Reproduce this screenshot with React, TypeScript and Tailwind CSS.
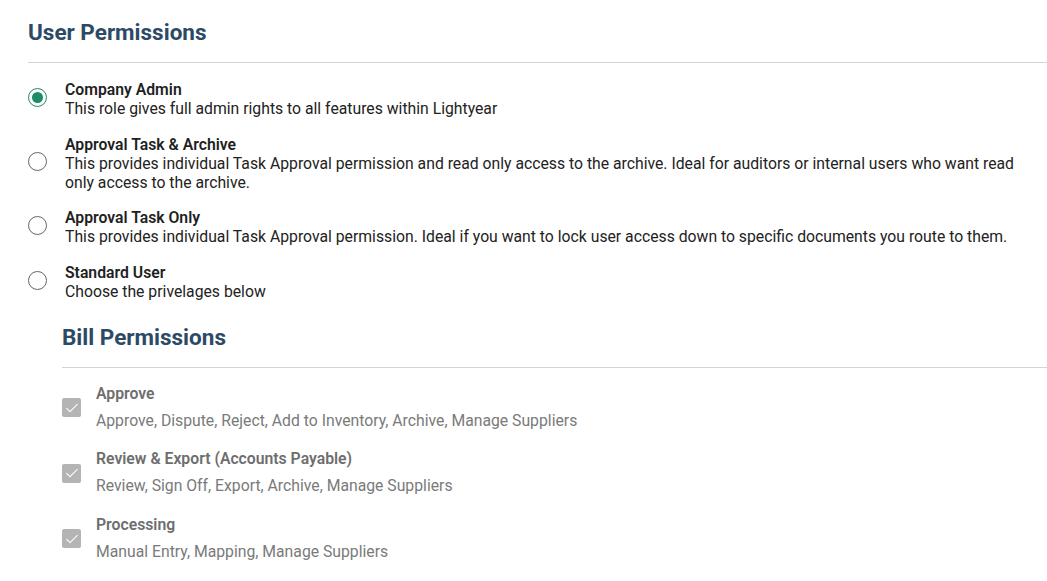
import React, { useState } from 'react';

const roles = [
  {
    id: 'admin',
    title: 'Company Admin',
    description: 'This role gives full admin rights to all features within Lightyear',
  },
  {
    id: 'approval-archive',
    title: 'Approval Task & Archive',
    description:
      'This provides individual Task Approval permission and read only access to the archive. Ideal for auditors or internal users who want read only access to the archive.',
  },
  {
    id: 'approval-only',
    title: 'Approval Task Only',
    description:
      'This provides individual Task Approval permission. Ideal if you want to lock user access down to specific documents you route to them.',
  },
  {
    id: 'standard',
    title: 'Standard User',
    description: 'Choose the privelages below',
  },
];

const billPermissions = [
  { title: 'Approve', description: 'Approve, Dispute, Reject, Add to Inventory, Archive, Manage Suppliers' },
  { title: 'Review & Export (Accounts Payable)', description: 'Review, Sign Off, Export, Archive, Manage Suppliers' },
  { title: 'Processing', description: 'Manual Entry, Mapping, Manage Suppliers' },
];

const Radio: React.FC<{ checked: boolean }> = ({ checked }) => (
  <span
    className={`w-[19px] h-[19px] rounded-full border flex items-center justify-center flex-shrink-0 ${
      checked ? 'border-[#1e8c64]' : 'border-[#666]'
    }`}
  >
    {checked && <span className="w-[11px] h-[11px] rounded-full bg-[#1e8c64]" />}
  </span>
);

const DisabledCheck = () => (
  <span className="w-[19px] h-[19px] rounded-[2px] bg-[#b4b4b4] flex items-center justify-center flex-shrink-0">
    <svg width="16" height="16" viewBox="0 0 24 24" fill="none" stroke="white" strokeWidth="1.6" strokeLinecap="round" strokeLinejoin="round">
      <path d="M4 12.5l5 5L20 6.5" />
    </svg>
  </span>
);

export default function App() {
  const [role, setRole] = useState('admin');

  return (
    <div className="min-h-screen bg-white pl-[28px] pt-[18px] font-['Roboto',sans-serif]">
      {/* User Permissions */}
      <h2 className="text-[22.5px] leading-[28px] font-bold text-[#2c4a66]">User Permissions</h2>
      <div className="mt-[16px] h-px bg-[#cbd5dc]" />

      <div className="mt-[17px] flex flex-col gap-[16.5px] pr-[28px]">
        {roles.map(r => (
          <label key={r.id} className="flex items-center gap-[18px] cursor-pointer" onClick={() => setRole(r.id)}>
            <span className="-mt-[3px]">
              <Radio checked={role === r.id} />
            </span>
            <span className="text-[15.75px] leading-[19px]">
              <span className="block font-semibold text-[#1f1f1f]">{r.title}</span>
              <span className="block text-[#222]">{r.description}</span>
            </span>
          </label>
        ))}
      </div>

      {/* Bill Permissions */}
      <div className="pl-[34px] mt-[22px]">
        <h2 className="text-[22.5px] leading-[28px] font-bold text-[#2c4a66]">Bill Permissions</h2>
        <div className="mt-[16px] h-px bg-[#cbd5dc]" />

        <div className="mt-[16px] flex flex-col gap-[17.5px]">
          {billPermissions.map(p => (
            <div key={p.title} className="flex items-center gap-[15px]">
              <DisabledCheck />
              <div>
                <div className="text-[15.75px] leading-[20px] font-semibold text-[#6e6e6e]">{p.title}</div>
                <div className="mt-[6px] text-[15.75px] leading-[22px] text-[#7a7a7a]">{p.description}</div>
              </div>
            </div>
          ))}
        </div>
      </div>
    </div>
  );
}
